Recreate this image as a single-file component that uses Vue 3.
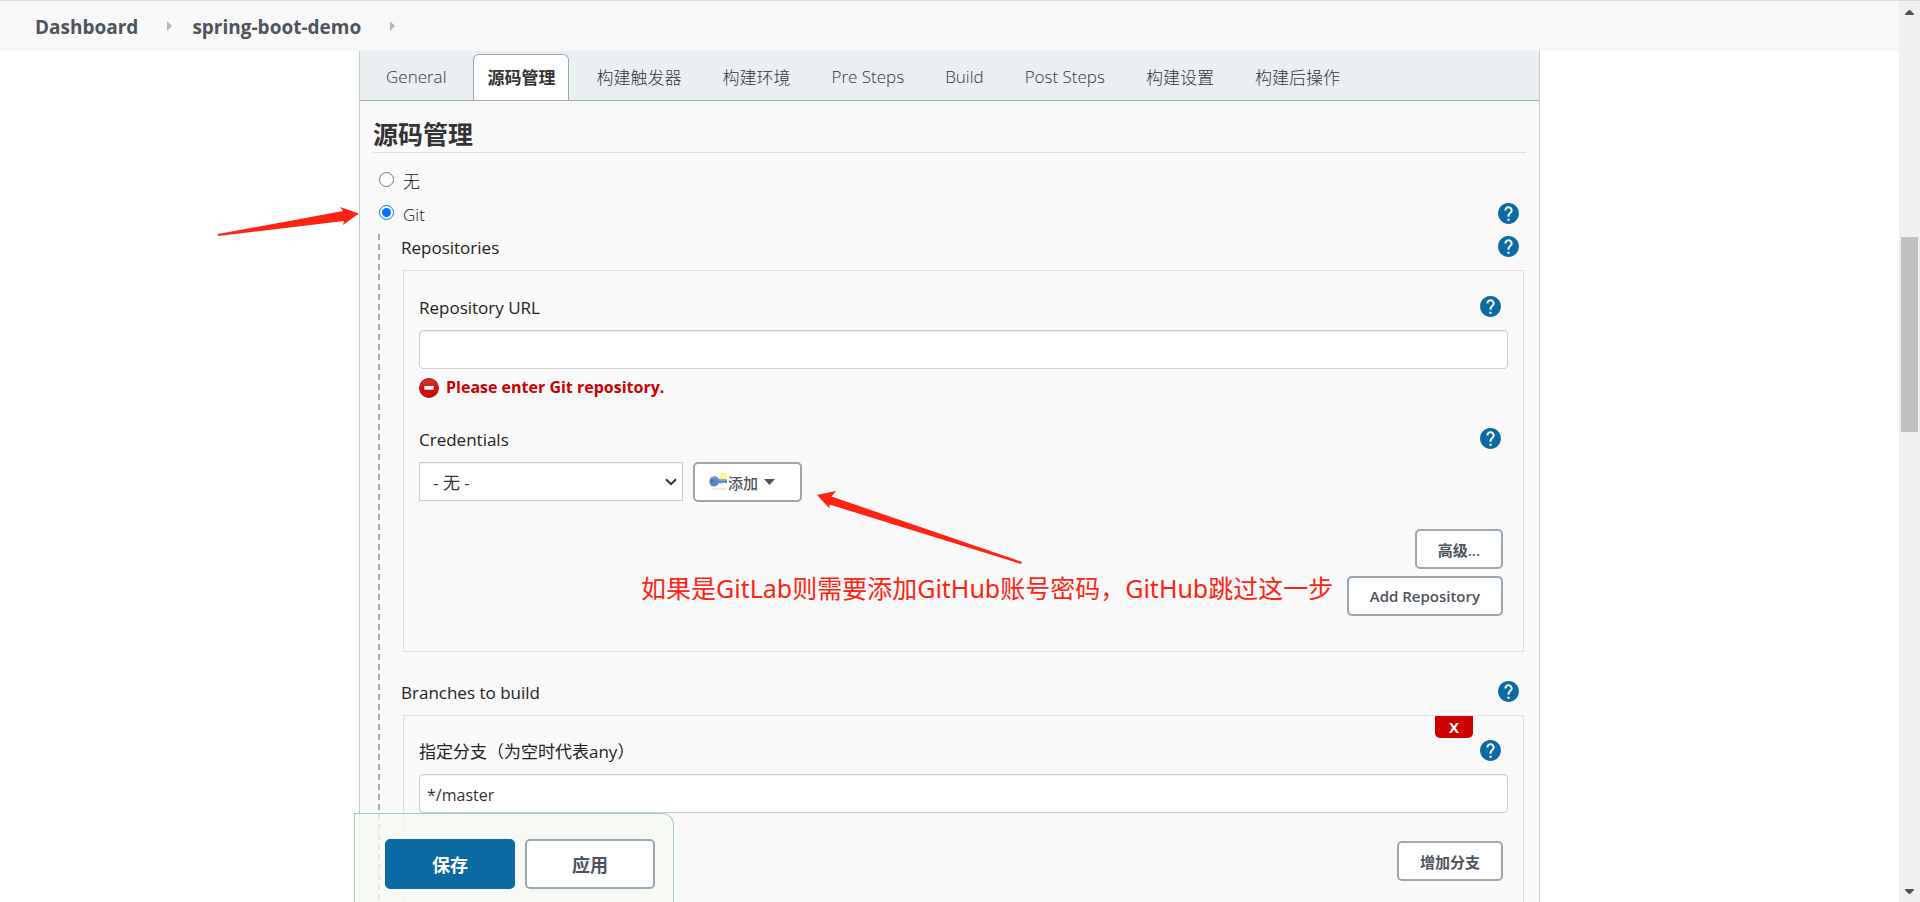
<script setup>
import { ref, h } from 'vue'

const tabs = ['General', '源码管理', '构建触发器', '构建环境', 'Pre Steps', 'Build', 'Post Steps', '构建设置', '构建后操作']
const activeTab = ref('源码管理')
const scm = ref('git')
const repositoryUrl = ref('')
const credentials = ref('none')
const branch = ref('*/master')

const HelpButton = (props) =>
  h('button', { type: 'button', class: 'help', 'aria-label': 'Help: ' + props.topic }, [
    h('svg', { viewBox: '0 0 24 24', width: 25, height: 25, 'aria-hidden': 'true' }, [
      h('path', {
        d: 'M12 2C6.48 2 2 6.48 2 12s4.48 10 10 10 10-4.48 10-10S17.52 2 12 2zm1 17h-2v-2h2v2zm2.07-7.75l-.9.92C13.45 12.9 13 13.5 13 15h-2v-.5c0-1.1.45-2.1 1.17-2.83l1.24-1.26c.37-.36.59-.86.59-1.41 0-1.1-.9-2-2-2s-2 .9-2 2H8c0-2.21 1.79-4 4-4s4 1.79 4 4c0 .88-.36 1.68-.93 2.25z'
      })
    ])
  ])
HelpButton.props = ['topic']
</script>

<template>
  <div class="window">
    <div class="page">
      <nav class="breadcrumbs" aria-label="Breadcrumb">
        <a href="#">Dashboard</a>
        <svg class="crumb-arrow" viewBox="0 0 5 10" aria-hidden="true"><path d="M0 0L5 5L0 10Z" /></svg>
        <a href="#">spring-boot-demo</a>
        <svg class="crumb-arrow" viewBox="0 0 5 10" aria-hidden="true"><path d="M0 0L5 5L0 10Z" /></svg>
      </nav>

      <main class="panel">
        <div class="tabs" role="tablist">
          <button
            v-for="tab in tabs"
            :key="tab"
            type="button"
            role="tab"
            class="tab"
            :class="{ active: tab === activeTab }"
            :aria-selected="tab === activeTab"
            @click="activeTab = tab"
          >{{ tab }}</button>
        </div>

        <h1 class="section-title">源码管理</h1>

        <div class="choices">
          <div class="row">
            <label class="choice"><input v-model="scm" type="radio" name="scm" value="none" /><span>无</span></label>
          </div>
          <div class="row">
            <label class="choice"><input v-model="scm" type="radio" name="scm" value="git" /><span>Git</span></label>
            <HelpButton topic="Git" />
          </div>
        </div>

        <section class="nested">
          <div class="row">
            <h2 class="label">Repositories</h2>
            <HelpButton topic="Repositories" />
          </div>
          <div class="box">
            <div class="row inner">
              <label class="label" for="repo-url">Repository URL</label>
              <HelpButton topic="Repository URL" />
            </div>
            <input id="repo-url" v-model="repositoryUrl" class="text-input" type="text" />
            <p class="error">
              <svg viewBox="0 0 20 20" aria-hidden="true">
                <defs>
                  <linearGradient id="stop-fill" x1="0" y1="0" x2="0" y2="1">
                    <stop offset="0" stop-color="#e03a3a" />
                    <stop offset=".5" stop-color="#d90d0d" />
                    <stop offset="1" stop-color="#d30000" />
                  </linearGradient>
                </defs>
                <circle cx="10" cy="10" r="9.4" fill="url(#stop-fill)" stroke="#a82020" stroke-width="1.2" />
                <rect x="5" y="7.5" width="10" height="4.5" rx=".6" fill="#fff" stroke="#a81818" stroke-width=".7" />
              </svg>
              <span>Please enter Git repository.</span>
            </p>

            <div class="row inner credentials-label">
              <label class="label" for="credentials">Credentials</label>
              <HelpButton topic="Credentials" />
            </div>
            <div class="credentials">
              <div class="select-wrap">
                <select id="credentials" v-model="credentials">
                  <option value="none">- 无 -</option>
                </select>
                <svg viewBox="0 0 12 8" aria-hidden="true"><path d="M1 1.2L6 6.2L11 1.2" /></svg>
              </div>
              <button type="button" class="btn add">
                <svg class="key" viewBox="0 0 19 18" aria-hidden="true">
                  <ellipse cx="10" cy="16" rx="8" ry="1.4" fill="#ececec" />
                  <circle cx="14.5" cy="3.5" r="3.5" fill="#fbf36a" />
                  <circle cx="14.5" cy="3.5" r="1.3" fill="#fffbc4" />
                  <path d="M5 3.2C8 3 9 5 10 6.3L18 6.6V10H15.5L14.8 9.2L13.8 10.6L12.6 9.4L11.8 10.4L10 10C9 12 7.5 13.4 5 13.4C2 13.4 .4 11.2 .4 8.4C.4 5.6 2 3.3 5 3.2Z" fill="#5b87bf" />
                  <path d="M2 5.5C3 4 6 3.6 7.5 5.6C8.5 7 9 7.6 17 7.6" fill="none" stroke="#86a9d6" />
                  <circle cx="3.1" cy="8.4" r="1.2" fill="#3c659c" />
                </svg>
                <span>添加</span>
                <svg class="caret" viewBox="0 0 11 6" aria-hidden="true"><path d="M0 0H11L5.5 6Z" /></svg>
              </button>
            </div>

            <div class="actions repo-actions">
              <button type="button" class="btn">高级...</button>
              <button type="button" class="btn">Add Repository</button>
            </div>
          </div>

          <div class="row branches-label">
            <h2 class="label">Branches to build</h2>
            <HelpButton topic="Branches to build" />
          </div>
          <div class="box branch-box">
            <button type="button" class="remove" aria-label="Remove branch">X</button>
            <div class="row inner">
              <label class="label" for="branch">指定分支（为空时代表any）</label>
              <HelpButton topic="Branch specifier" />
            </div>
            <input id="branch" v-model="branch" class="text-input" type="text" />
            <div class="actions">
              <button type="button" class="btn">增加分支</button>
            </div>
          </div>
        </section>

        <svg class="note-arrow git-arrow" viewBox="0 0 142 30" aria-hidden="true">
          <path d="M141 13.5L122 7L125 11L0 34L0 36L126 21L125 25Z" />
        </svg>
        <svg class="note-arrow add-arrow" viewBox="0 0 206 74" aria-hidden="true">
          <path d="M0 4L19 0L14.5 5.5L205 71L204 73L12.5 13.5L12.5 17.5Z" />
        </svg>
        <p class="note">如果是GitLab则需要添加GitHub账号密码，GitHub跳过这一步</p>

        <div class="bottom-bar">
          <button type="submit" class="btn large primary">保存</button>
          <button type="button" class="btn large">应用</button>
        </div>
      </main>
    </div>

    <div class="scrollbar" aria-hidden="true">
      <svg viewBox="0 0 9 5"><path d="M4 0H5L9 4V5H0V4Z" /></svg>
      <div class="track"><div class="thumb"></div></div>
      <svg viewBox="0 0 9 5"><path d="M0 0H9V1L5 5H4L0 1Z" /></svg>
    </div>
  </div>
</template>

<style>
body {
  margin: 0;
  overflow: hidden;
  background: #fff;
}
.help {
  display: flex;
  align-items: center;
  justify-content: center;
  width: 21px;
  height: 21px;
  padding: 0;
  border: 0;
  background: none;
}
.help svg {
  flex: none;
  fill: #0b6aa2;
}
</style>

<style scoped>
* {
  box-sizing: border-box;
}
.window {
  display: flex;
  height: 100vh;
  border-top: 1px solid #dadae0;
  font-family: "Open Sans", "Noto Sans CJK SC", sans-serif;
  font-size: 17px;
  line-height: 24px;
  color: #333;
}
button,
input,
select {
  font-family: inherit;
  color: inherit;
}
.page {
  display: flex;
  flex: 1;
  flex-direction: column;
  min-width: 0;
}
.breadcrumbs {
  display: flex;
  flex: none;
  align-items: center;
  height: 50px;
  padding: 0 35px;
  background: #f8f8f8;
  font-size: 19px;
  font-weight: 700;
}
.breadcrumbs a {
  padding-top: 2px;
  color: #4d545d;
  text-decoration: none;
}
.crumb-arrow {
  width: 5px;
  height: 10px;
  margin: 0 20px 0 29px;
  fill: #b5b8ba;
}
.panel {
  position: relative;
  flex: 1;
  width: 100%;
  max-width: 1181px;
  min-height: 0;
  margin: 0 auto;
  border: solid #c9cccf;
  border-width: 0 1px;
  background: #f9f9f9;
}
.tabs {
  display: flex;
  gap: 13px;
  height: 50px;
  padding: 3px 12px 0;
  border-bottom: 1px solid #98a9b2;
  background: #eaeff2;
}
.tab {
  padding: 0 13px 2px;
  border: 1px solid transparent;
  border-bottom: 0;
  border-radius: 6px 6px 0 0;
  background: none;
  font-size: 17px;
  font-weight: 300;
  color: #2f3540;
  white-space: nowrap;
}
.tab.active {
  border-color: #98a9b2;
  background: #fff;
  font-weight: 700;
  color: #333;
}
.section-title {
  margin: 0 13px;
  padding: 15px 0 0;
  border-bottom: 1px solid #dedede;
  font-size: 25px;
  line-height: 36px;
  font-weight: 700;
}
.row {
  display: flex;
  align-items: center;
  justify-content: space-between;
  height: 33px;
  padding-right: 20px;
}
.row.inner {
  margin-bottom: 7px;
  padding-right: 7px;
}
.choices {
  margin-top: 11px;
}
.choice {
  display: flex;
  align-items: center;
  gap: 9px;
  padding-left: 19px;
  font-weight: 300;
  color: #111;
}
.choice input {
  width: 15px;
  height: 15px;
  margin: 0 0 2px;
  accent-color: #0075ff;
}
.choice span {
  padding-top: 2px;
}
.nested {
  margin-left: 18px;
  padding-left: 23px;
  background: repeating-linear-gradient(#f9f9f9 0 4px, #aaa 4px 10px) 0 0 / 2px 100% no-repeat;
}
.label {
  margin: 0;
  padding-top: 2px;
  font-size: 17px;
  font-weight: 400;
  color: #222;
}
.box {
  position: relative;
  margin: 7px 15px 0 2px;
  padding: 19px 15px 35px;
  border: 1px solid #dedede;
}
.branch-box {
  padding-top: 18px;
}
.branches-label {
  margin-top: 23px;
}
.text-input,
select {
  display: block;
  width: 100%;
  height: 39px;
  border: 1px solid #ccc;
  background: #fff;
  box-shadow: inset 0 1px 1px #eee;
  font-size: 16px;
}
.text-input {
  padding: 2px 7px 0;
  border-radius: 4px;
}
.error {
  display: flex;
  align-items: center;
  gap: 7px;
  height: 20px;
  margin: 9px 0 0;
  font-size: 16px;
  font-weight: 700;
  color: #c00;
}
.error svg {
  width: 20px;
  height: 20px;
}
.error span {
  padding-bottom: 2px;
}
.credentials-label {
  margin-top: 24px;
}
.credentials {
  display: flex;
  gap: 10px;
}
.select-wrap {
  position: relative;
  width: 264px;
}
select {
  padding: 2px 13px 0;
  border-radius: 0;
  font-size: 17px;
  appearance: none;
}
.select-wrap svg {
  position: absolute;
  top: 16px;
  right: 6px;
  width: 12px;
  height: 8px;
  fill: none;
  stroke: #333;
  stroke-width: 2;
  pointer-events: none;
}
.btn {
  height: 40px;
  padding: 0 21px;
  border: 2px solid #9aa7b0;
  border-radius: 5px;
  background: #fff;
  font-size: 15px;
  font-weight: 600;
  color: #4d545d;
}
.btn.add {
  display: flex;
  align-items: center;
  width: 109px;
  padding: 0 14px;
  font-weight: 500;
}
.key {
  width: 19px;
  height: 18px;
}
.caret {
  width: 11px;
  height: 6px;
  margin-left: 6px;
  fill: #4d545d;
}
.actions {
  display: flex;
  flex-direction: column;
  align-items: flex-end;
  gap: 7px;
  margin-top: 28px;
  padding-right: 5px;
}
.repo-actions {
  margin-top: 27px;
}
.remove {
  position: absolute;
  top: 0;
  right: 50px;
  width: 38px;
  height: 22px;
  padding: 0;
  border: 0;
  border-radius: 0 0 5px 5px;
  background: #c00;
  font-size: 15px;
  line-height: 22px;
  font-weight: 700;
  color: #fff;
}
.note-arrow {
  position: absolute;
  overflow: visible;
  fill: #ff2312;
}
.git-arrow {
  top: 149px;
  left: -142px;
  width: 142px;
  height: 30px;
}
.add-arrow {
  top: 440px;
  left: 457px;
  width: 206px;
  height: 74px;
}
.note {
  position: absolute;
  top: 519px;
  left: 281px;
  margin: 0;
  font-family: "Noto Sans", "Noto Sans CJK SC", sans-serif;
  font-size: 25px;
  line-height: 36px;
  color: #ff2312;
  white-space: nowrap;
}
.bottom-bar {
  position: absolute;
  bottom: 0;
  left: -6px;
  display: flex;
  gap: 10px;
  padding: 25px 18px 13px 30px;
  border: 1px solid #a3cdbb;
  border-bottom: 0;
  border-radius: 0 12px 0 0;
  background: rgba(245, 250, 240, 0.8);
}
.btn.large {
  width: 130px;
  height: 50px;
  font-size: 18px;
  font-weight: 700;
}
.btn.primary {
  border-color: #0b6aa2;
  background: #0b6aa2;
  color: #fff;
}
.scrollbar {
  display: flex;
  flex: none;
  flex-direction: column;
  align-items: center;
  width: 21px;
  padding: 9px 0 8px;
  background: #f0f0f0;
}
.scrollbar svg {
  width: 9px;
  height: 5px;
  fill: #505050;
}
.track {
  flex: 1;
  width: 17px;
  padding-top: 222px;
}
.thumb {
  height: 195px;
  background: #c1c1c1;
}
</style>
